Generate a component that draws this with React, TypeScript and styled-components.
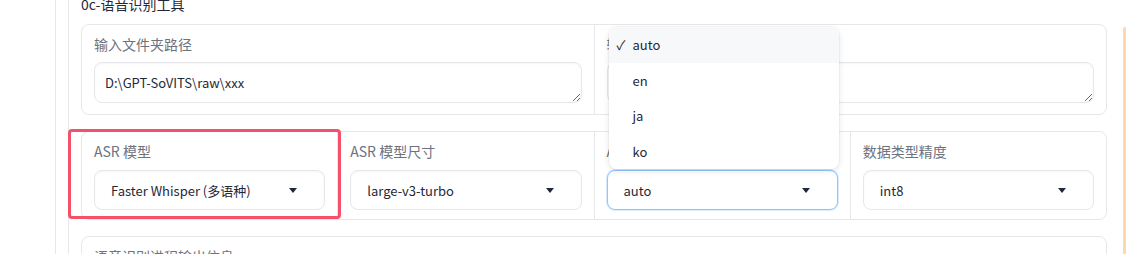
import styled, { createGlobalStyle } from "styled-components";

const GlobalStyle = createGlobalStyle`
    html, body {
        margin: 0;
        padding: 0;
        overflow: hidden;
        background: #fff;
    }
    body {
        font-family: "Noto Sans CJK SC", "Noto Sans", sans-serif;
        color: #1f2937;
    }
`;

const languages = ["auto", "en", "ja", "ko"];

const Page = styled.div`
    display: flex;
    align-items: flex-start;
    padding-left: 55px;
    height: 254px;
    overflow: hidden;
`;

const Rail = styled.div`
    border-left: 1px solid #e5e7eb;
    padding-left: 12px;
    height: 100%;
`;

const Column = styled.div`
    border-left: 1px solid #e5e7eb;
    padding-left: 12px;
    width: 1026px;
    height: 100%;
    display: flex;
    flex-direction: column;
    gap: 16px;
`;

const Title = styled.div`
    font-size: 14px;
    line-height: 20px;
    margin-top: -6px;
    margin-bottom: -6px;
    color: #1f2937;
`;

const Group = styled.div<{ $cols: number }>`
    display: grid;
    grid-template-columns: repeat(${(p) => p.$cols}, 1fr);
    gap: 1px;
    background: #e5e7eb;
    border: 1px solid #e5e7eb;
    border-radius: 8px;
`;

const Block = styled.div`
    position: relative;
    background: #fff;
    padding: 9px 12px 9px;
    display: flex;
    flex-direction: column;
    &:first-child {
        border-radius: 7px 0 0 7px;
    }
    &:last-child {
        border-radius: 0 7px 7px 0;
    }
    &:only-child {
        border-radius: 7px;
    }
`;

const Label = styled.span`
    font-size: 14px;
    line-height: 20px;
    color: #6b7280;
    margin-bottom: 8px;
`;

const TextArea = styled.textarea`
    box-sizing: border-box;
    height: 41px;
    width: 100%;
    margin: 0 0 2px;
    padding: 9px 10px;
    font: inherit;
    font-size: 13px;
    line-height: 21px;
    color: #1f2937;
    border: 1px solid #e5e7eb;
    border-radius: 8px;
    box-shadow: inset 0 1px 2px rgba(0, 0, 0, 0.04);
    resize: vertical;
    outline: none;
    background: #fff;
`;

const Select = styled.div<{ $focused?: boolean }>`
    position: relative;
    box-sizing: border-box;
    height: 40px;
    margin-top: 1px;
    display: flex;
    align-items: center;
    justify-content: space-between;
    padding: 0 27px 0 16px;
    font-size: 13px;
    color: #1f2937;
    border: 1px solid ${(p) => (p.$focused ? "#93c5fd" : "#e5e7eb")};
    border-radius: 8px;
    box-shadow: ${(p) =>
        p.$focused
            ? "0 0 0 1px rgba(147, 197, 253, 0.35)"
            : "inset 0 1px 2px rgba(0, 0, 0, 0.04)"};
    background: #fff;
`;

const Arrow = styled.svg`
    width: 8px;
    height: 5px;
    fill: #1f2937;
`;

const Menu = styled.ul`
    position: absolute;
    left: 1px;
    bottom: calc(100% + 2px);
    width: calc(100% + 1px);
    margin: 0;
    padding: 0;
    list-style: none;
    background: #fff;
    border-radius: 8px;
    box-shadow: 0 2px 6px rgba(0, 0, 0, 0.1), 0 0 0 1px rgba(0, 0, 0, 0.03);
    z-index: 5;
`;

const Option = styled.li<{ $active?: boolean }>`
    position: relative;
    height: 35.5px;
    display: flex;
    align-items: center;
    padding-left: 24px;
    font-size: 13px;
    color: #1f2937;
    background: ${(p) => (p.$active ? "#f7f8fa" : "transparent")};
    &:first-child {
        border-radius: 8px 8px 0 0;
    }
`;

const Check = styled.span`
    position: absolute;
    left: 8px;
    font-size: 13px;
`;

const Highlight = styled.div`
    position: absolute;
    top: -3px;
    bottom: 0;
    left: -14px;
    right: -4px;
    border: 3px solid #f3526a;
    border-radius: 4px;
    pointer-events: none;
    z-index: 3;
`;

const SidePanel = styled.div`
    margin-top: 27px;
    margin-left: 16px;
    width: 40px;
    height: 400px;
    border: 2px solid #fdd8ad;
    border-radius: 8px;
`;

function DropArrow() {
    return (
        <Arrow viewBox="0 0 8 5">
            <path d="M0 0h8L4 5z" />
        </Arrow>
    );
}

function Dropdown({ value, open }: { value: string; open?: boolean }) {
    return (
        <Select $focused={open}>
            <span>{value}</span>
            <DropArrow />
            {open && (
                <Menu>
                    {languages.map((lang, i) => (
                        <Option key={lang} $active={i === 0}>
                            {i === 0 && <Check>✓</Check>}
                            {lang}
                        </Option>
                    ))}
                </Menu>
            )}
        </Select>
    );
}

export default function App() {
    return (
        <>
            <GlobalStyle />
            <Page>
                <Rail>
                    <Column>
                        <Title>0c-语音识别工具</Title>
                        <Group $cols={2}>
                            <Block>
                                <Label>输入文件夹路径</Label>
                                <TextArea rows={1} readOnly value={"D:\\GPT-SoVITS\\raw\\xxx"} />
                            </Block>
                            <Block>
                                <Label>输出文件夹路径</Label>
                                <TextArea rows={1} readOnly value="" />
                            </Block>
                        </Group>
                        <Group $cols={4}>
                            <Block>
                                <Label>ASR 模型</Label>
                                <Dropdown value="Faster Whisper (多语种)" />
                                <Highlight />
                            </Block>
                            <Block>
                                <Label>ASR 模型尺寸</Label>
                                <Dropdown value="large-v3-turbo" />
                            </Block>
                            <Block>
                                <Label>ASR 语言设置</Label>
                                <Dropdown value="auto" open />
                            </Block>
                            <Block>
                                <Label>数据类型精度</Label>
                                <Dropdown value="int8" />
                            </Block>
                        </Group>
                        <Group $cols={1}>
                            <Block>
                                <Label>语音识别进程输出信息</Label>
                                <TextArea rows={1} readOnly value="" />
                            </Block>
                        </Group>
                    </Column>
                </Rail>
                <SidePanel />
            </Page>
        </>
    );
}
